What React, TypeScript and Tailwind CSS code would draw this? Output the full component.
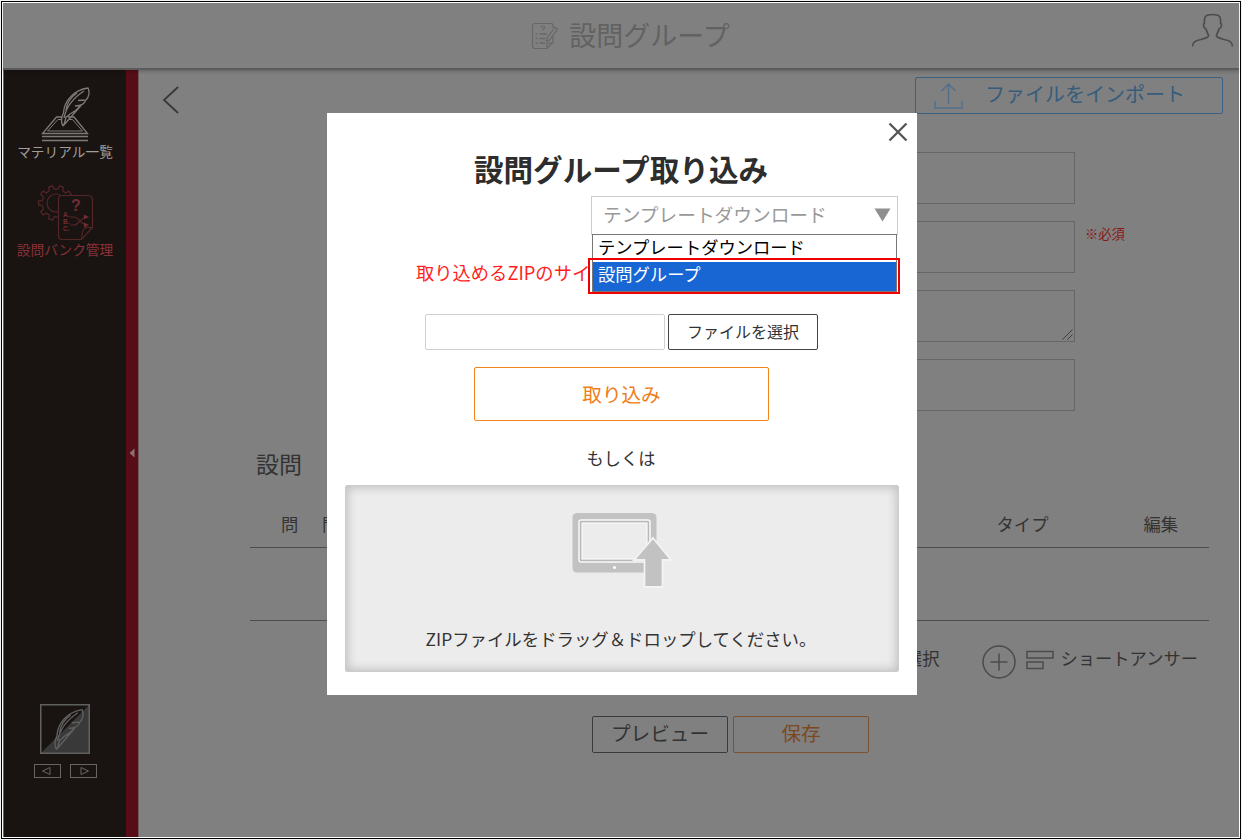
import React, { useState } from 'react'
import { clsx } from 'clsx'

const options = ['テンプレートダウンロード', '設問グループ']

const GEAR_PATH = Array.from({ length: 10 }, (_, i) => {
  const point = (deg: number, r: number) => {
    const a = ((i * 36 + deg) * Math.PI) / 180
    return `${(18 + r * Math.cos(a)).toFixed(2)} ${(19 + r * Math.sin(a)).toFixed(2)}`
  }
  return `${i === 0 ? 'M' : 'L'}${point(-10, 14)}L${point(-7, 17.5)}L${point(7, 17.5)}L${point(10, 14)}`
}).join('') + 'Z'

function Feather() {
  return (
    <>
      <path d="M23 40C20 35 22 30 23.500 27C24 15 34 4 48 2C50 6 49 11 46 14L38 14.500M46 14C44 18 42 19.500 35 20M41 19.500C37 24 32 27 30 28C28 30 27 31 26 31C25 36 24 39 23 40Z" />
      <path d="M24 32C26 22 33 12 44 5M26 24C27 17 31 11 37 7" />
    </>
  )
}

function QuillIcon() {
  return (
    <svg width="50" height="58" viewBox="0 0 50 58" fill="none" stroke="#7d7a79" strokeWidth="1.3">
      <path d="M22 31H16.500L2.500 47.500H47.500L34 31H28" />
      <path d="M22 33.500H18L7.500 45H42.500L32.500 33.500H28" strokeWidth="1" />
      <path d="M2 50.500H48M2 54.500H48" strokeWidth="1.400" />
      <Feather />
    </svg>
  )
}

function QuestionBankIcon() {
  return (
    <svg width="58" height="58" viewBox="0 0 58 58" fill="none" stroke="#552527" strokeWidth="1.2">
      <path d={GEAR_PATH} />
      <circle cx="18" cy="19" r="9" />
      <path d="M24 11.500H50Q54.500 11.500 54.500 16V43.500L43.500 55.500H24Q20.500 55.500 20.500 52V15Q20.500 11.500 24 11.500Z" fill="#191412" />
      <path d="M54.500 43.500H48Q44 44 43.500 55.500" />
      <path d="M32 33h4c5 0 7 8 13 8M32 41h4c5 0 7-8 13-8" />
      <path d="M46 30.500l5 2.500-5 2.500zM46 38.500l5 2.500-5 2.500z" fill="#702d32" stroke="none" />
      <g fill="#702d32" stroke="none" className="font-['Liberation_Sans',sans-serif] font-bold">
        <text x="33" y="27" fontSize="16">?</text>
        <text x="25" y="33" fontSize="6.500">A.</text>
        <text x="25" y="40" fontSize="6.500">B.</text>
        <text x="25" y="47" fontSize="6.500">C.</text>
      </g>
    </svg>
  )
}

function Sidebar() {
  return (
    <aside className="flex w-[136px] shrink-0 border-l border-[#5c666b]">
      <div className="flex w-[122px] flex-col items-center bg-[#191412] pt-4 text-[13.700px] leading-5 whitespace-nowrap">
        <QuillIcon />
        <span className="-mt-[3px] text-[#a09d9c]">マテリアル一覧</span>
        <div className="mt-[23px] ml-[3px]"><QuestionBankIcon /></div>
        <span className="-mt-[3px] text-[#8a3038]">設問バンク管理</span>
        <div className="mt-auto flex flex-col items-center pb-[59px]">
          <svg width="50" height="50" viewBox="0 0 50 50" fill="none" stroke="#606060">
            <path d="M49 1V49H1Z" fill="#393939" stroke="none" />
            <rect x="0.75" y="0.75" width="48.500" height="48.500" strokeWidth="1.500" />
            <g transform="translate(-7 3.500) scale(1.02 1.05)" strokeWidth="1.300"><Feather /></g>
          </svg>
          <div className="mt-2.5 flex gap-[9px]">
            <svg width="27" height="14" viewBox="0 0 27 14" fill="none" stroke="#676564">
              <rect x="0.5" y="0.5" width="26" height="13" />
              <path d="M16 3.500V10.500L8.500 7Z" />
            </svg>
            <svg width="27" height="14" viewBox="0 0 27 14" fill="none" stroke="#676564">
              <rect x="0.5" y="0.5" width="26" height="13" />
              <path d="M11 3.500V10.500L18.500 7Z" />
            </svg>
          </div>
        </div>
      </div>
      <div className="flex w-[13px] items-center border-r border-[#6e5a5c] bg-[#560d17]">
        <svg className="mb-0.5 ml-[3px]" width="6" height="10" viewBox="0 0 6 10"><path d="M5.500 0.500V9.500L0.500 5Z" fill="#8a7174" /></svg>
      </div>
    </aside>
  )
}

function Header() {
  return (
    <header className="relative z-10 flex h-[67px] shrink-0 items-center border-b-2 border-[#5b5b5b] shadow-[0_2px_3px_rgba(0,0,0,0.18)]">
      <div className="flex flex-1 items-center justify-center gap-2.5 pl-[67px] text-[27px] leading-9 text-[#626262]">
        <svg width="28" height="28" viewBox="0 0 28 28" fill="none" stroke="#676767" strokeWidth="1.2">
          <path d="M22 6V3.500Q22 1.500 20 1.500H4Q1.500 1.500 1.500 4V24Q1.500 26.500 4 26.500H16L22 20V14M16 26.500V21H22" />
          <path d="M16 16L24 5L26.500 7L18.500 18L15.500 19Z" />
          <path d="M4.500 12H6.500M8.500 12H16M4.500 16.500H6.500M8.500 16.500H14M4.500 21H6.500M8.500 21H14" strokeWidth="1.700" />
          <path d="M10 5.500C10 3.500 13.500 3.500 13.500 5.500S11.500 7 11.500 8.500" />
        </svg>
        <h1 className="-mt-0.5">設問グループ</h1>
      </div>
      <svg className="mr-[5px] -mt-2.5" width="43" height="35" viewBox="0 0 43 35" fill="none" stroke="#4c4c4c" strokeWidth="1.700">
        <path d="M1.500 33.500C1.500 28 6 27.500 10 26.500C15 25 19 24 17 21C16 19 15.500 18 15 16C12 14.500 12 11 13.500 10C13 4 14 1.500 21.500 1.500S30 4 29.500 10C31 11 31 14.500 28 16C27.500 18 27 19 26 21C24 24 28 25 33 26.500C37 27.500 41.500 28 41.500 33.500" />
      </svg>
    </header>
  )
}

function QuestionGroupPage() {
  return (
    <main className="flex flex-1 flex-col overflow-hidden text-[17.300px] text-[#333333]">
      <div className="flex h-[82px] items-start justify-between pt-[7px] pr-4 pl-[23px]">
        <svg className="mt-[9px]" width="18" height="28" viewBox="0 0 18 28" fill="none" stroke="#383838" strokeWidth="1.800">
          <path d="M16 1L2 14L16 27" />
        </svg>
        <button className="flex h-[37px] w-[308px] items-center rounded-xs border-[1.500px] border-[#3a6084] pl-[18px] text-[20px] text-[#365c7d]">
          <svg width="29" height="28" viewBox="0 0 29 28" fill="none" stroke="#526f89" strokeWidth="1.500">
            <path d="M1 19V26H28V19M14.500 22V2M7.500 9L14.500 2L21.500 9" />
          </svg>
          <span className="-mt-1 ml-[22px]">ファイルをインポート</span>
        </button>
      </div>
      <div className="flex flex-col gap-[17px] pl-[300px]">
        <input className="h-[52px] w-[636px] border border-[#666666]" />
        <div className="flex gap-2.5">
          <input className="h-[52px] w-[636px] border border-[#666666]" />
          <span className="pt-[3px] text-[13.300px] text-[#8a1818]">※必須</span>
        </div>
        <div className="flex h-[52px] w-[636px] items-end justify-end border border-[#666666] p-px">
          <svg width="11" height="11" viewBox="0 0 11 11" stroke="#3c3c3c"><path d="M0.500 10.500L10.500 0.500M5.500 10.500L10.500 5.500" /></svg>
        </div>
        <input className="h-[52px] w-[636px] border border-[#666666]" />
      </div>
      <section className="mt-[34px] ml-[111px] w-[959px]">
        <h2 className="pl-1.5 text-[23px] leading-9">設問</h2>
        <div className="mt-[13px] flex h-[54px] items-end border-b border-[#4d4d4d] pb-2.5 leading-[26px]">
          <span className="w-[41px] pl-[31px]">問</span>
          <span className="ml-[31px]">問題</span>
          <span className="ml-auto">タイプ</span>
          <span className="mr-[31px] ml-[95px]">編集</span>
        </div>
        <div className="h-[73px] border-b border-[#4d4d4d]" />
        <div className="mt-6 flex items-center justify-end pr-[11px]">
          <span className="-mt-2 mr-[43px]">選択</span>
          <svg width="34" height="34" viewBox="0 0 34 34" fill="none" stroke="#4b4b4b" strokeWidth="1.500">
            <circle cx="17" cy="17" r="16" />
            <path d="M17 8.500V25.500M8.500 17H25.500" />
          </svg>
          <svg className="-mt-1 ml-2.5" width="28" height="20" viewBox="0 0 28 20" fill="none" stroke="#4b4b4b" strokeWidth="1.500">
            <path d="M1 1.500H27V8H1ZM1 12H17V18.500H1Z" />
          </svg>
          <span className="-mt-2 ml-1.5">ショートアンサー</span>
        </div>
      </section>
      <div className="mt-[37px] flex gap-[5px] pl-[453px] text-[19.600px] leading-8">
        <button className="h-[37px] w-[136px] rounded-xs border-[1.500px] border-[#3a3a3a] pb-1">プレビュー</button>
        <button className="h-[37px] w-[136px] rounded-xs border-[1.500px] border-[#7c5330] pb-1 text-[#7c491f]">保存</button>
      </div>
    </main>
  )
}

function UploadIcon() {
  return (
    <svg width="100" height="76" viewBox="0 0 100 76">
      <rect x="0.500" y="1" width="84" height="59.500" rx="4.500" fill="#c2c2c2" />
      <rect x="7" y="8" width="71" height="42" rx="2" fill="#b9b9b9" stroke="#fafafa" strokeWidth="1.500" />
      <rect x="10" y="11" width="65" height="36" fill="#ececec" stroke="#fafafa" strokeWidth="1.200" />
      <circle cx="42.500" cy="55.500" r="1.500" fill="#fff" />
      <path d="M81 26L99 48H90.500V75H72.500V48H62Z" fill="#c2c2c2" stroke="#f3f3f3" strokeWidth="1.800" />
    </svg>
  )
}

function ImportDialog() {
  const [selected, setSelected] = useState(1)

  return (
    <div className="absolute top-[111px] left-[325px] z-20 flex h-[582px] w-[590px] flex-col items-center bg-white text-[#333333]">
      <button className="mt-[9px] mr-[9px] self-end">
        <svg width="20" height="20" viewBox="0 0 20 20" stroke="#555555" strokeWidth="2.300"><path d="M1.500 1.500L18.500 18.500M18.500 1.500L1.500 18.500" /></svg>
      </button>
      <h2 className="mt-[5px] mr-[2px] text-[29.600px] leading-[44px] font-bold text-[#2d2d2d]">設問グループ取り込み</h2>
      <div className="relative mt-[5px] mr-[19px] h-[39px] w-[307px] self-end">
        <div className="flex h-full items-center justify-between border border-[#cccccc] pr-1.5 pb-0.5 pl-[11px] text-[18.700px] text-[#999999]">
          {options[0]}
          <svg width="17" height="14" viewBox="0 0 17 14"><path d="M0.500 0.500H16.500L8.500 13.500Z" fill="#8f8f8f" /></svg>
        </div>
        {/* Open option list */}
        <ul className="absolute top-[38px] left-px w-[305px] border border-[#777777] bg-white text-[17.300px] text-black">
          {options.map((option, i) => (
            <li
              key={option}
              onClick={() => setSelected(i)}
              className={clsx('flex items-center pl-[5px]', i === selected ? 'h-[29px] bg-[#1766d4] pb-[5px] text-white' : 'h-[27px] pb-1')}
            >
              {option}
            </li>
          ))}
        </ul>
        <div className="pointer-events-none absolute top-[62px] -left-[3px] h-9 w-[312px] border-2 border-[#f00000]" />
      </div>
      <p className="mt-[23px] ml-[89px] self-start text-[18.300px] leading-7 whitespace-nowrap text-[#ff1f1f]">取り込めるZIPのサイ</p>
      <div className="mt-[28px] mr-px flex gap-[3px]">
        <div className="h-9 w-[240px] rounded-xs border-[1.500px] border-[#d0d0d0]" />
        <button className="h-9 w-[150px] rounded-xs border-[1.500px] border-[#444444] pb-0.5 text-[16px] leading-8">ファイルを選択</button>
      </div>
      <button className="mt-[17px] mr-px h-[54px] w-[295px] rounded-xs border-[1.500px] border-[#f08619] text-[19.600px] text-[#ef7d1a]">取り込み</button>
      <p className="mt-6 mr-0.5 text-[17.200px] leading-[26px]">もしくは</p>
      <div className="mt-[14px] flex h-[187px] w-[554px] flex-col items-center rounded-xs border border-[#cccccc] bg-[#ececec] pt-[26px] shadow-[inset_0_0_10px_2px_rgba(0,0,0,0.18)]">
        <UploadIcon />
        <p className="mt-[38px] mr-0.5 text-[17.400px] leading-[26px]">ZIPファイルをドラッグ＆ドロップしてください。</p>
      </div>
    </div>
  )
}

export default function App() {
  return (
    <div className="h-[840px] w-[1242px] overflow-hidden bg-[#f4f4f4] pt-px pl-px font-['Noto_Sans_CJK_JP',sans-serif]">
      <div className="relative h-[838px] w-[1240px] border border-black bg-white p-px">
        <div className="flex h-full flex-col bg-[#808080]">
          <Header />
          <div className="flex min-h-0 flex-1">
            <Sidebar />
            <QuestionGroupPage />
          </div>
        </div>
        <ImportDialog />
      </div>
    </div>
  )
}
